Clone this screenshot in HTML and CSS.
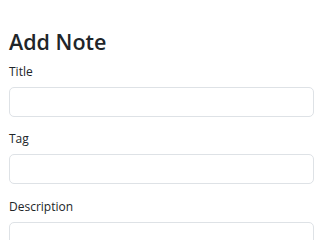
FILE: index.html
```html
<!DOCTYPE html>
<html lang="en">
<head>
<meta charset="utf-8">
<title>Add Note</title>
<link rel="stylesheet" href="styles.css">
</head>
<body>
<div class="container">
  <h2 class="heading">Add Note</h2>
  <form class="note-form">
    <div class="field">
      <label class="field-label" for="title">Title</label>
      <input class="field-input" type="text" id="title">
    </div>
    <div class="field">
      <label class="field-label" for="tag">Tag</label>
      <input class="field-input" type="text" id="tag">
    </div>
    <div class="field">
      <label class="field-label" for="description">Description</label>
      <input class="field-input" type="text" id="description">
    </div>
  </form>
</div>
</body>
</html>
```
FILE: styles.css
```css
html, body {
  margin: 0;
  padding: 0;
  background: #ffffff;
}
body {
  font-family: "Open Sans", "Noto Sans", sans-serif;
  color: #212529;
}
.container {
  padding: 28px 6px 0 9px;
}
.heading {
  margin: 0 0 6px 0;
  font-size: 21.5px;
  line-height: 27.6px;
  font-weight: 600;
  color: #212529;
}
.note-form {
  display: flex;
  flex-direction: column;
}
.field {
  display: flex;
  flex-direction: column;
  margin-bottom: 12.5px;
}
.field-label {
  font-size: 12px;
  line-height: 19px;
  margin-bottom: 6px;
  color: #212529;
}
.field-input {
  box-sizing: border-box;
  height: 30px;
  width: 100%;
  border: 1px solid #dee2e6;
  border-radius: 5px;
  background: #fff;
  padding: 0 10px;
  font: inherit;
  font-size: 12px;
  outline: none;
}
```
